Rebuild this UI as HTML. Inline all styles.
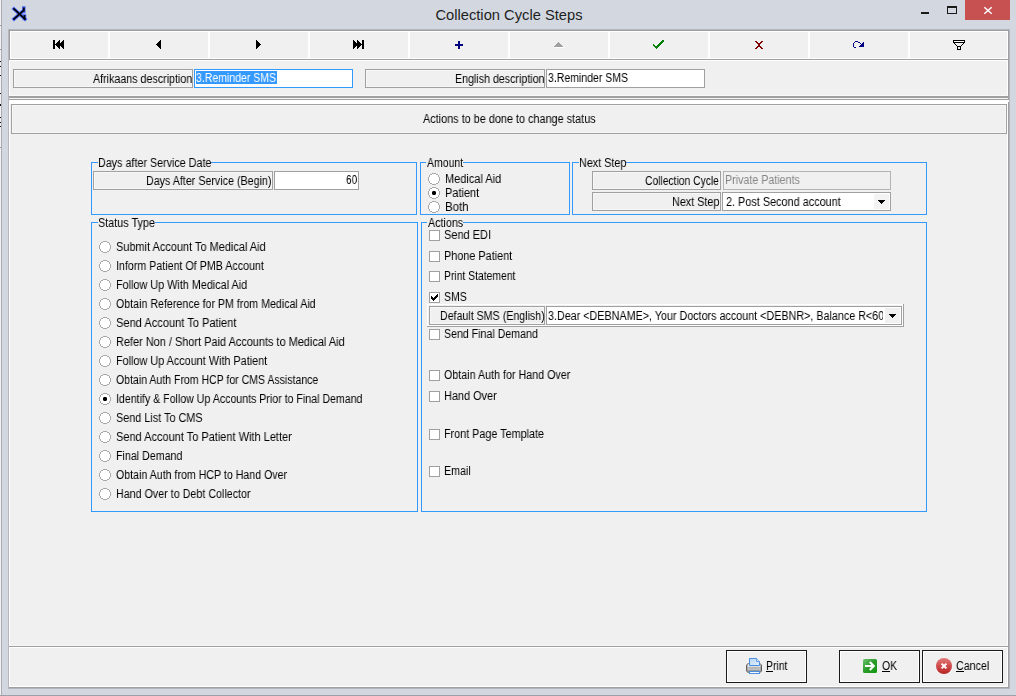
<!DOCTYPE html>
<html><head><meta charset="utf-8"><style>
html,body{margin:0;padding:0;width:1016px;height:696px;overflow:hidden;background:#d3d8e0}
body{position:relative;font-family:"Liberation Sans",sans-serif}
.t{position:absolute;white-space:nowrap;line-height:13px;font-size:12px;color:#000;will-change:transform}
</style></head><body>
<div style="position:absolute;left:0;top:0;width:1016px;height:696px;background:#d3d8e0"></div>
<div style="position:absolute;left:0px;top:0px;width:1px;height:696px;background:#f2f2f2"></div>
<div style="position:absolute;left:1px;top:0px;width:1px;height:696px;background:#a9adb3"></div>
<div style="position:absolute;left:0px;top:25px;width:1px;height:1px;background:#9a9a9a"></div>
<div style="position:absolute;left:0px;top:49px;width:1px;height:1px;background:#9a9a9a"></div>
<div style="position:absolute;left:0px;top:147px;width:1px;height:1px;background:#9a9a9a"></div>
<div style="position:absolute;left:0px;top:61px;width:1px;height:1px;background:#111"></div>
<div style="position:absolute;left:0px;top:66px;width:1px;height:1px;background:#111"></div>
<div style="position:absolute;left:0px;top:75px;width:1px;height:1px;background:#111"></div>
<div style="position:absolute;left:0px;top:93px;width:1px;height:1px;background:#111"></div>
<div style="position:absolute;left:0px;top:104px;width:1px;height:1px;background:#111"></div>
<div style="position:absolute;left:0px;top:105px;width:1px;height:1px;background:#111"></div>
<div style="position:absolute;left:0px;top:117px;width:1px;height:1px;background:#111"></div>
<div style="position:absolute;left:0px;top:122px;width:1px;height:1px;background:#111"></div>
<div style="position:absolute;left:0px;top:126px;width:1px;height:1px;background:#111"></div>
<div style="position:absolute;left:208.6px;width:600px;top:6px;text-align:center;font-size:15px;line-height:18px;color:#1e1e1e;transform:scaleX(0.981);transform-origin:50% 0">Collection Cycle Steps</div>
<svg style="position:absolute;left:0;top:0" width="32" height="28" viewBox="0 0 32 28">
<g stroke="#3a5cff" stroke-width="3.5" stroke-linecap="square" fill="none" opacity="0.9">
<path d="M14 9 L25 19"/><path d="M14 19 L22.5 11.5"/><path d="M23.8 8 L23.8 11.5"/><path d="M24.5 16 L24.5 18.5"/>
</g>
<g stroke="#000" stroke-width="1.7" stroke-linecap="square" fill="none">
<path d="M14 9 L25 19"/><path d="M14 19 L22.5 11.5"/><path d="M24.5 16 L24.5 18.5"/>
</g>
<path d="M23.8 7.5 L23.8 11.5" stroke="#000" stroke-width="1.9" fill="none"/>
</svg>
<div style="position:absolute;left:921px;top:12px;width:8px;height:2px;background:#1a1a1a"></div>
<div style="position:absolute;left:947px;top:6px;width:10px;height:8px;border:1px solid #1a1a1a;border-top-width:2px;box-sizing:border-box"></div>
<div style="position:absolute;left:965px;top:0px;width:45px;height:20px;background:#c75050"></div>
<svg style="position:absolute;left:0;top:0" width="1016" height="20">
<path d="M984.3 7.3 L991.7 13.7 M991.7 7.3 L984.3 13.7" stroke="#fff" stroke-width="1.5" fill="none"/></svg>
<div style="position:absolute;left:8px;top:29px;width:1002px;height:660px;background:#f0f0f0"></div>
<div style="position:absolute;left:8px;top:29px;width:1px;height:660px;background:#b3b7bd"></div>
<div style="position:absolute;left:1009px;top:29px;width:1px;height:660px;background:#b3b7bd"></div>
<div style="position:absolute;left:8px;top:29px;width:1002px;height:1px;background:#b3b7bd"></div>
<div style="position:absolute;left:8px;top:688px;width:1002px;height:1px;background:#b3b7bd"></div>
<div style="position:absolute;left:9px;top:30px;width:1000px;height:1px;background:#a0a0a0"></div>
<div style="position:absolute;left:1008px;top:30px;width:1px;height:70px;background:#a0a0a0"></div>
<div style="position:absolute;left:1008px;top:102px;width:1px;height:586px;background:#a0a0a0"></div>
<div style="position:absolute;left:9px;top:687px;width:1000px;height:1px;background:#a0a0a0"></div>
<div style="position:absolute;left:9px;top:30px;width:1px;height:30px;background:#a0a0a0"></div>
<div style="position:absolute;left:10px;top:31px;width:998px;height:1px;background:#fff"></div>
<div style="position:absolute;left:10px;top:31px;width:1px;height:28px;background:#fff"></div>
<div style="position:absolute;left:9px;top:60px;width:1px;height:627px;background:#fff"></div>
<div style="position:absolute;left:1007px;top:31px;width:1px;height:656px;background:#fff"></div>
<div style="position:absolute;left:9px;top:686px;width:999px;height:1px;background:#fff"></div>
<div style="position:absolute;left:0px;top:695px;width:1016px;height:1px;background:#9da1a7"></div>
<div style="position:absolute;left:10px;top:58px;width:998px;height:1px;background:#fff"></div>
<div style="position:absolute;left:9px;top:59px;width:1000px;height:1px;background:#a0a0a0"></div>
<div style="position:absolute;left:9px;top:60px;width:999px;height:1px;background:#fff"></div>
<div style="position:absolute;left:108px;top:32px;width:2px;height:26px;background:#fff"></div>
<div style="position:absolute;left:208px;top:32px;width:2px;height:26px;background:#fff"></div>
<div style="position:absolute;left:308px;top:32px;width:2px;height:26px;background:#fff"></div>
<div style="position:absolute;left:408px;top:32px;width:2px;height:26px;background:#fff"></div>
<div style="position:absolute;left:508px;top:32px;width:2px;height:26px;background:#fff"></div>
<div style="position:absolute;left:608px;top:32px;width:2px;height:26px;background:#fff"></div>
<div style="position:absolute;left:708px;top:32px;width:2px;height:26px;background:#fff"></div>
<div style="position:absolute;left:808px;top:32px;width:2px;height:26px;background:#fff"></div>
<div style="position:absolute;left:908px;top:32px;width:2px;height:26px;background:#fff"></div>
<svg style="position:absolute;left:0;top:0;shape-rendering:crispEdges" width="1016" height="60"><rect x="53" y="40" width="2" height="1" fill="#000"/><rect x="59" y="40" width="1" height="1" fill="#000"/><rect x="63" y="40" width="1" height="1" fill="#000"/><rect x="53" y="41" width="2" height="1" fill="#000"/><rect x="58" y="41" width="2" height="1" fill="#000"/><rect x="62" y="41" width="2" height="1" fill="#000"/><rect x="53" y="42" width="2" height="1" fill="#000"/><rect x="57" y="42" width="3" height="1" fill="#000"/><rect x="61" y="42" width="3" height="1" fill="#000"/><rect x="53" y="43" width="2" height="1" fill="#000"/><rect x="56" y="43" width="4" height="1" fill="#000"/><rect x="60" y="43" width="4" height="1" fill="#000"/><rect x="53" y="44" width="2" height="1" fill="#000"/><rect x="55" y="44" width="5" height="1" fill="#000"/><rect x="59" y="44" width="5" height="1" fill="#000"/><rect x="53" y="45" width="2" height="1" fill="#000"/><rect x="56" y="45" width="4" height="1" fill="#000"/><rect x="60" y="45" width="4" height="1" fill="#000"/><rect x="53" y="46" width="2" height="1" fill="#000"/><rect x="57" y="46" width="3" height="1" fill="#000"/><rect x="61" y="46" width="3" height="1" fill="#000"/><rect x="53" y="47" width="2" height="1" fill="#000"/><rect x="58" y="47" width="2" height="1" fill="#000"/><rect x="62" y="47" width="2" height="1" fill="#000"/><rect x="53" y="48" width="2" height="1" fill="#000"/><rect x="59" y="48" width="1" height="1" fill="#000"/><rect x="63" y="48" width="1" height="1" fill="#000"/><rect x="160" y="40" width="1" height="1" fill="#000"/><rect x="159" y="41" width="2" height="1" fill="#000"/><rect x="158" y="42" width="3" height="1" fill="#000"/><rect x="157" y="43" width="4" height="1" fill="#000"/><rect x="156" y="44" width="5" height="1" fill="#000"/><rect x="157" y="45" width="4" height="1" fill="#000"/><rect x="158" y="46" width="3" height="1" fill="#000"/><rect x="159" y="47" width="2" height="1" fill="#000"/><rect x="160" y="48" width="1" height="1" fill="#000"/><rect x="256" y="40" width="1" height="1" fill="#000"/><rect x="256" y="41" width="2" height="1" fill="#000"/><rect x="256" y="42" width="3" height="1" fill="#000"/><rect x="256" y="43" width="4" height="1" fill="#000"/><rect x="256" y="44" width="5" height="1" fill="#000"/><rect x="256" y="45" width="4" height="1" fill="#000"/><rect x="256" y="46" width="3" height="1" fill="#000"/><rect x="256" y="47" width="2" height="1" fill="#000"/><rect x="256" y="48" width="1" height="1" fill="#000"/><rect x="353" y="40" width="1" height="1" fill="#000"/><rect x="357" y="40" width="1" height="1" fill="#000"/><rect x="362" y="40" width="2" height="1" fill="#000"/><rect x="353" y="41" width="2" height="1" fill="#000"/><rect x="357" y="41" width="2" height="1" fill="#000"/><rect x="362" y="41" width="2" height="1" fill="#000"/><rect x="353" y="42" width="3" height="1" fill="#000"/><rect x="357" y="42" width="3" height="1" fill="#000"/><rect x="362" y="42" width="2" height="1" fill="#000"/><rect x="353" y="43" width="4" height="1" fill="#000"/><rect x="357" y="43" width="4" height="1" fill="#000"/><rect x="362" y="43" width="2" height="1" fill="#000"/><rect x="353" y="44" width="5" height="1" fill="#000"/><rect x="357" y="44" width="5" height="1" fill="#000"/><rect x="362" y="44" width="2" height="1" fill="#000"/><rect x="353" y="45" width="4" height="1" fill="#000"/><rect x="357" y="45" width="4" height="1" fill="#000"/><rect x="362" y="45" width="2" height="1" fill="#000"/><rect x="353" y="46" width="3" height="1" fill="#000"/><rect x="357" y="46" width="3" height="1" fill="#000"/><rect x="362" y="46" width="2" height="1" fill="#000"/><rect x="353" y="47" width="2" height="1" fill="#000"/><rect x="357" y="47" width="2" height="1" fill="#000"/><rect x="362" y="47" width="2" height="1" fill="#000"/><rect x="353" y="48" width="1" height="1" fill="#000"/><rect x="357" y="48" width="1" height="1" fill="#000"/><rect x="362" y="48" width="2" height="1" fill="#000"/><rect x="455" y="44" width="8" height="1" fill="#000080"/><rect x="455" y="45" width="8" height="1" fill="#000080"/><rect x="458" y="41" width="2" height="1" fill="#000080"/><rect x="458" y="42" width="2" height="1" fill="#000080"/><rect x="458" y="43" width="2" height="1" fill="#000080"/><rect x="458" y="44" width="2" height="1" fill="#000080"/><rect x="458" y="45" width="2" height="1" fill="#000080"/><rect x="458" y="46" width="2" height="1" fill="#000080"/><rect x="458" y="47" width="2" height="1" fill="#000080"/><rect x="458" y="48" width="2" height="1" fill="#000080"/><rect x="558" y="42" width="1" height="1" fill="#a0a0a0"/><rect x="557" y="43" width="3" height="1" fill="#a0a0a0"/><rect x="556" y="44" width="5" height="1" fill="#a0a0a0"/><rect x="555" y="45" width="7" height="1" fill="#a0a0a0"/><rect x="554" y="46" width="9" height="1" fill="#a0a0a0"/><rect x="555" y="47" width="9" height="1" fill="#ffffff"/><rect x="662" y="40" width="2" height="1" fill="#008000"/><rect x="661" y="41" width="3" height="1" fill="#008000"/><rect x="660" y="42" width="3" height="1" fill="#008000"/><rect x="659" y="43" width="3" height="1" fill="#008000"/><rect x="653" y="44" width="1" height="1" fill="#008000"/><rect x="658" y="44" width="3" height="1" fill="#008000"/><rect x="653" y="45" width="2" height="1" fill="#008000"/><rect x="657" y="45" width="3" height="1" fill="#008000"/><rect x="654" y="46" width="5" height="1" fill="#008000"/><rect x="655" y="47" width="3" height="1" fill="#008000"/><rect x="656" y="48" width="1" height="1" fill="#008000"/><rect x="755" y="41" width="2" height="1" fill="#800000"/><rect x="761" y="41" width="2" height="1" fill="#800000"/><rect x="756" y="42" width="2" height="1" fill="#800000"/><rect x="760" y="42" width="2" height="1" fill="#800000"/><rect x="757" y="43" width="2" height="1" fill="#800000"/><rect x="759" y="43" width="2" height="1" fill="#800000"/><rect x="758" y="44" width="2" height="1" fill="#800000"/><rect x="758" y="44" width="2" height="1" fill="#800000"/><rect x="758" y="45" width="2" height="1" fill="#800000"/><rect x="758" y="45" width="2" height="1" fill="#800000"/><rect x="757" y="46" width="2" height="1" fill="#800000"/><rect x="759" y="46" width="2" height="1" fill="#800000"/><rect x="756" y="47" width="2" height="1" fill="#800000"/><rect x="760" y="47" width="2" height="1" fill="#800000"/><rect x="755" y="48" width="2" height="1" fill="#800000"/><rect x="761" y="48" width="2" height="1" fill="#800000"/><rect x="855" y="41" width="3" height="1" fill="#000080"/><rect x="854" y="42" width="1" height="1" fill="#000080"/><rect x="858" y="42" width="2" height="1" fill="#000080"/><rect x="863" y="42" width="1" height="1" fill="#000080"/><rect x="853" y="43" width="1" height="1" fill="#000080"/><rect x="860" y="43" width="1" height="1" fill="#000080"/><rect x="862" y="43" width="2" height="1" fill="#000080"/><rect x="853" y="44" width="1" height="1" fill="#000080"/><rect x="861" y="44" width="3" height="1" fill="#000080"/><rect x="853" y="45" width="1" height="1" fill="#000080"/><rect x="860" y="45" width="4" height="1" fill="#000080"/><rect x="853" y="46" width="1" height="1" fill="#000080"/><rect x="859" y="46" width="5" height="1" fill="#000080"/><rect x="854" y="47" width="2" height="1" fill="#000080"/><rect x="953" y="40" width="12" height="1" fill="#000"/><rect x="953" y="41" width="1" height="1" fill="#000"/><rect x="964" y="41" width="1" height="1" fill="#000"/><rect x="953" y="42" width="12" height="1" fill="#000"/><rect x="954" y="43" width="1" height="1" fill="#000"/><rect x="963" y="43" width="1" height="1" fill="#000"/><rect x="955" y="44" width="1" height="1" fill="#000"/><rect x="962" y="44" width="1" height="1" fill="#000"/><rect x="956" y="45" width="1" height="1" fill="#000"/><rect x="961" y="45" width="1" height="1" fill="#000"/><rect x="957" y="46" width="4" height="1" fill="#000"/><rect x="957" y="47" width="1" height="1" fill="#000"/><rect x="960" y="47" width="1" height="1" fill="#000"/><rect x="957" y="48" width="1" height="1" fill="#000"/><rect x="960" y="48" width="1" height="1" fill="#000"/><rect x="957" y="49" width="4" height="1" fill="#000"/><rect x="954" y="41" width="10" height="1" fill="#fff"/></svg>
<div style="position:absolute;left:13px;top:69px;width:180px;height:19px;border:1px solid #a0a0a0;box-sizing:border-box;box-shadow:inset 1px 1px 0 #f7f7f7, inset -1px -1px 0 #f7f7f7"></div>
<div class="t" style="left:93.11px;top:73px;color:#000;transform:scaleX(0.8909);transform-origin:0 0;">Afrikaans description</div>
<div style="position:absolute;left:194px;top:69px;width:159px;height:19px;border:1px solid #3399ff;box-sizing:border-box;background:#fff"></div>
<div style="position:absolute;left:196px;top:71px;width:81px;height:13px;background:#3399ff"></div>
<div class="t" style="left:196.12px;top:72px;color:#fff;transform:scaleX(0.8764);transform-origin:0 0;">3.Reminder SMS</div>
<div style="position:absolute;left:365px;top:69px;width:180px;height:19px;border:1px solid #a0a0a0;box-sizing:border-box;box-shadow:inset 1px 1px 0 #f7f7f7, inset -1px -1px 0 #f7f7f7"></div>
<div class="t" style="left:455.22px;top:73px;color:#000;transform:scaleX(0.8878);transform-origin:0 0;">English description</div>
<div style="position:absolute;left:546px;top:69px;width:159px;height:19px;border:1px solid #a0a0a0;box-sizing:border-box;background:#fff"></div>
<div class="t" style="left:548.12px;top:72px;color:#000;transform:scaleX(0.8764);transform-origin:0 0;">3.Reminder SMS</div>
<div style="position:absolute;left:10px;top:95px;width:998px;height:1px;background:#f8f8f8"></div>
<div style="position:absolute;left:9px;top:96px;width:1000px;height:1px;background:#a0a0a0"></div>
<div style="position:absolute;left:9px;top:97px;width:1000px;height:1px;background:#a0a0a0"></div>
<div style="position:absolute;left:9px;top:98px;width:999px;height:1px;background:#f4f4f4"></div>
<div style="position:absolute;left:9px;top:99px;width:1000px;height:1px;background:#a0a0a0"></div>
<div style="position:absolute;left:9px;top:100px;width:1000px;height:2px;background:#fff"></div>
<div style="position:absolute;left:9px;top:102px;width:999px;height:2px;background:#fff"></div>
<div style="position:absolute;left:11px;top:104px;width:996px;height:30px;border:1px solid #a0a0a0;box-sizing:border-box;box-shadow:inset 1px 1px 0 #f7f7f7, inset -1px -1px 0 #f7f7f7"></div>
<div class="t" style="left:423.00px;top:113px;color:#000;transform:scaleX(0.9048);transform-origin:0 0;">Actions to be done to change status</div>
<div style="position:absolute;left:91px;top:162px;width:326px;height:53px;border:1px solid #3399ff;box-sizing:border-box"></div>
<div style="position:absolute;left:98px;top:161px;width:113px;height:3px;background:#f0f0f0"></div>
<div class="t" style="left:98.10px;top:157px;color:#000;transform:scaleX(0.8952);transform-origin:0 0;">Days after Service Date</div>
<div style="position:absolute;left:93px;top:171px;width:180px;height:19px;border:1px solid #a0a0a0;box-sizing:border-box;box-shadow:inset 1px 1px 0 #f7f7f7, inset -1px -1px 0 #f7f7f7"></div>
<div class="t" style="left:146.22px;top:175px;color:#000;transform:scaleX(0.8913);transform-origin:0 0;">Days After Service (Begin)</div>
<div style="position:absolute;left:274px;top:171px;width:85px;height:19px;border:1px solid #a0a0a0;box-sizing:border-box;background:#fff"></div>
<div class="t" style="left:346.17px;top:174px;color:#000;transform:scaleX(0.8333);transform-origin:0 0;">60</div>
<div style="position:absolute;left:420px;top:162px;width:150px;height:53px;border:1px solid #3399ff;box-sizing:border-box"></div>
<div style="position:absolute;left:426px;top:161px;width:37px;height:3px;background:#f0f0f0"></div>
<div class="t" style="left:427.00px;top:157px;color:#000;transform:scaleX(0.8750);transform-origin:0 0;">Amount</div>
<svg style="position:absolute;left:428px;top:173px;shape-rendering:crispEdges" width="12" height="12"><path d="M4 0h4v1h2v1h1v2h1v4h-1v2h-1v1h-2v1h-4v-1h-2v-1h-1v-2h-1v-4h1v-2h1v-1h2z" fill="#a8a8a8"/><path d="M4 1h4v1h2v2h1v4h-1v2h-2v1h-4v-1h-2v-2h-1v-4h1v-2h2z" fill="#fff"/></svg>
<div class="t" style="left:445.08px;top:173px;color:#000;transform:scaleX(0.9153);transform-origin:0 0;">Medical Aid</div>
<svg style="position:absolute;left:428px;top:187px;shape-rendering:crispEdges" width="12" height="12"><path d="M4 0h4v1h2v1h1v2h1v4h-1v2h-1v1h-2v1h-4v-1h-2v-1h-1v-2h-1v-4h1v-2h1v-1h2z" fill="#a8a8a8"/><path d="M4 1h4v1h2v2h1v4h-1v2h-2v1h-4v-1h-2v-2h-1v-4h1v-2h2z" fill="#fff"/><rect x="5" y="4" width="2" height="4" fill="#000"/><rect x="4" y="5" width="4" height="2" fill="#000"/><rect x="4" y="4" width="1" height="1" fill="#777"/><rect x="7" y="4" width="1" height="1" fill="#777"/><rect x="4" y="7" width="1" height="1" fill="#777"/><rect x="7" y="7" width="1" height="1" fill="#777"/></svg>
<div class="t" style="left:445.09px;top:187px;color:#000;transform:scaleX(0.9143);transform-origin:0 0;">Patient</div>
<svg style="position:absolute;left:428px;top:201px;shape-rendering:crispEdges" width="12" height="12"><path d="M4 0h4v1h2v1h1v2h1v4h-1v2h-1v1h-2v1h-4v-1h-2v-1h-1v-2h-1v-4h1v-2h1v-1h2z" fill="#a8a8a8"/><path d="M4 1h4v1h2v2h1v4h-1v2h-2v1h-4v-1h-2v-2h-1v-4h1v-2h2z" fill="#fff"/></svg>
<div class="t" style="left:445.05px;top:201px;color:#000;transform:scaleX(0.9545);transform-origin:0 0;">Both</div>
<div style="position:absolute;left:572px;top:162px;width:355px;height:53px;border:1px solid #3399ff;box-sizing:border-box"></div>
<div style="position:absolute;left:579px;top:161px;width:47px;height:3px;background:#f0f0f0"></div>
<div class="t" style="left:579.10px;top:157px;color:#000;transform:scaleX(0.9000);transform-origin:0 0;">Next Step</div>
<div style="position:absolute;left:592px;top:171px;width:129px;height:19px;border:1px solid #a0a0a0;box-sizing:border-box;box-shadow:inset 1px 1px 0 #f7f7f7, inset -1px -1px 0 #f7f7f7"></div>
<div class="t" style="left:645.14px;top:175px;color:#000;transform:scaleX(0.8588);transform-origin:0 0;">Collection Cycle</div>
<div style="position:absolute;left:723px;top:171px;width:168px;height:19px;border:1px solid #b4b4b4;box-sizing:border-box;background:#f0f0f0"></div>
<div class="t" style="left:725.11px;top:174px;color:#858585;transform:scaleX(0.8902);transform-origin:0 0;">Private Patients</div>
<div style="position:absolute;left:592px;top:192px;width:129px;height:19px;border:1px solid #a0a0a0;box-sizing:border-box;box-shadow:inset 1px 1px 0 #f7f7f7, inset -1px -1px 0 #f7f7f7"></div>
<div class="t" style="left:672.20px;top:196px;color:#000;transform:scaleX(0.9000);transform-origin:0 0;">Next Step</div>
<div style="position:absolute;left:722px;top:192px;width:169px;height:19px;border:1px solid #a0a0a0;box-sizing:border-box;background:#fff"></div>
<div class="t" style="left:726.00px;top:196px;color:#000;transform:scaleX(0.9048);transform-origin:0 0;">2. Post Second account</div>
<div style="position:absolute;left:874px;top:194px;width:15px;height:15px;background:#f3f3f3"></div>
<svg style="position:absolute;left:878px;top:200px;shape-rendering:crispEdges" width="7" height="4"><path d="M0 0h7v1h-1v1h-1v1h-1v1h-1v-1h-1v-1h-1v-1h-1z" fill="#000"/></svg>
<div style="position:absolute;left:91px;top:222px;width:327px;height:290px;border:1px solid #3399ff;box-sizing:border-box"></div>
<div style="position:absolute;left:98px;top:221px;width:57px;height:3px;background:#f0f0f0"></div>
<div class="t" style="left:98.10px;top:217px;color:#000;transform:scaleX(0.9016);transform-origin:0 0;">Status Type</div>
<svg style="position:absolute;left:99px;top:241px;shape-rendering:crispEdges" width="12" height="12"><path d="M4 0h4v1h2v1h1v2h1v4h-1v2h-1v1h-2v1h-4v-1h-2v-1h-1v-2h-1v-4h1v-2h1v-1h2z" fill="#a8a8a8"/><path d="M4 1h4v1h2v2h1v4h-1v2h-2v1h-4v-1h-2v-2h-1v-4h1v-2h2z" fill="#fff"/></svg>
<div class="t" style="left:116.09px;top:241px;color:#000;transform:scaleX(0.9130);transform-origin:0 0;">Submit Account To Medical Aid</div>
<svg style="position:absolute;left:99px;top:260px;shape-rendering:crispEdges" width="12" height="12"><path d="M4 0h4v1h2v1h1v2h1v4h-1v2h-1v1h-2v1h-4v-1h-2v-1h-1v-2h-1v-4h1v-2h1v-1h2z" fill="#a8a8a8"/><path d="M4 1h4v1h2v2h1v4h-1v2h-2v1h-4v-1h-2v-2h-1v-4h1v-2h2z" fill="#fff"/></svg>
<div class="t" style="left:116.11px;top:260px;color:#000;transform:scaleX(0.8902);transform-origin:0 0;">Inform Patient Of PMB Account</div>
<svg style="position:absolute;left:99px;top:279px;shape-rendering:crispEdges" width="12" height="12"><path d="M4 0h4v1h2v1h1v2h1v4h-1v2h-1v1h-2v1h-4v-1h-2v-1h-1v-2h-1v-4h1v-2h1v-1h2z" fill="#a8a8a8"/><path d="M4 1h4v1h2v2h1v4h-1v2h-2v1h-4v-1h-2v-2h-1v-4h1v-2h2z" fill="#fff"/></svg>
<div class="t" style="left:116.10px;top:279px;color:#000;transform:scaleX(0.9021);transform-origin:0 0;">Follow Up With Medical Aid</div>
<svg style="position:absolute;left:99px;top:298px;shape-rendering:crispEdges" width="12" height="12"><path d="M4 0h4v1h2v1h1v2h1v4h-1v2h-1v1h-2v1h-4v-1h-2v-1h-1v-2h-1v-4h1v-2h1v-1h2z" fill="#a8a8a8"/><path d="M4 1h4v1h2v2h1v4h-1v2h-2v1h-4v-1h-2v-2h-1v-4h1v-2h2z" fill="#fff"/></svg>
<div class="t" style="left:116.30px;top:298px;color:#000;transform:scaleX(0.8879);transform-origin:0 0;">Obtain Reference for PM from Medical Aid</div>
<svg style="position:absolute;left:99px;top:317px;shape-rendering:crispEdges" width="12" height="12"><path d="M4 0h4v1h2v1h1v2h1v4h-1v2h-1v1h-2v1h-4v-1h-2v-1h-1v-2h-1v-4h1v-2h1v-1h2z" fill="#a8a8a8"/><path d="M4 1h4v1h2v2h1v4h-1v2h-2v1h-4v-1h-2v-2h-1v-4h1v-2h2z" fill="#fff"/></svg>
<div class="t" style="left:116.08px;top:317px;color:#000;transform:scaleX(0.9225);transform-origin:0 0;">Send Account To Patient</div>
<svg style="position:absolute;left:99px;top:336px;shape-rendering:crispEdges" width="12" height="12"><path d="M4 0h4v1h2v1h1v2h1v4h-1v2h-1v1h-2v1h-4v-1h-2v-1h-1v-2h-1v-4h1v-2h1v-1h2z" fill="#a8a8a8"/><path d="M4 1h4v1h2v2h1v4h-1v2h-2v1h-4v-1h-2v-2h-1v-4h1v-2h2z" fill="#fff"/></svg>
<div class="t" style="left:116.09px;top:336px;color:#000;transform:scaleX(0.9113);transform-origin:0 0;">Refer Non / Short Paid Accounts to Medical Aid</div>
<svg style="position:absolute;left:99px;top:355px;shape-rendering:crispEdges" width="12" height="12"><path d="M4 0h4v1h2v1h1v2h1v4h-1v2h-1v1h-2v1h-4v-1h-2v-1h-1v-2h-1v-4h1v-2h1v-1h2z" fill="#a8a8a8"/><path d="M4 1h4v1h2v2h1v4h-1v2h-2v1h-4v-1h-2v-2h-1v-4h1v-2h2z" fill="#fff"/></svg>
<div class="t" style="left:116.10px;top:355px;color:#000;transform:scaleX(0.9030);transform-origin:0 0;">Follow Up Account With Patient</div>
<svg style="position:absolute;left:99px;top:374px;shape-rendering:crispEdges" width="12" height="12"><path d="M4 0h4v1h2v1h1v2h1v4h-1v2h-1v1h-2v1h-4v-1h-2v-1h-1v-2h-1v-4h1v-2h1v-1h2z" fill="#a8a8a8"/><path d="M4 1h4v1h2v2h1v4h-1v2h-2v1h-4v-1h-2v-2h-1v-4h1v-2h2z" fill="#fff"/></svg>
<div class="t" style="left:116.30px;top:374px;color:#000;transform:scaleX(0.8777);transform-origin:0 0;">Obtain Auth From HCP for CMS Assistance</div>
<svg style="position:absolute;left:99px;top:393px;shape-rendering:crispEdges" width="12" height="12"><path d="M4 0h4v1h2v1h1v2h1v4h-1v2h-1v1h-2v1h-4v-1h-2v-1h-1v-2h-1v-4h1v-2h1v-1h2z" fill="#a8a8a8"/><path d="M4 1h4v1h2v2h1v4h-1v2h-2v1h-4v-1h-2v-2h-1v-4h1v-2h2z" fill="#fff"/><rect x="5" y="4" width="2" height="4" fill="#000"/><rect x="4" y="5" width="4" height="2" fill="#000"/><rect x="4" y="4" width="1" height="1" fill="#777"/><rect x="7" y="4" width="1" height="1" fill="#777"/><rect x="4" y="7" width="1" height="1" fill="#777"/><rect x="7" y="7" width="1" height="1" fill="#777"/></svg>
<div class="t" style="left:116.12px;top:393px;color:#000;transform:scaleX(0.8841);transform-origin:0 0;">Identify &amp; Follow Up Accounts Prior to Final Demand</div>
<svg style="position:absolute;left:99px;top:412px;shape-rendering:crispEdges" width="12" height="12"><path d="M4 0h4v1h2v1h1v2h1v4h-1v2h-1v1h-2v1h-4v-1h-2v-1h-1v-2h-1v-4h1v-2h1v-1h2z" fill="#a8a8a8"/><path d="M4 1h4v1h2v2h1v4h-1v2h-2v1h-4v-1h-2v-2h-1v-4h1v-2h2z" fill="#fff"/></svg>
<div class="t" style="left:116.10px;top:412px;color:#000;transform:scaleX(0.9032);transform-origin:0 0;">Send List To CMS</div>
<svg style="position:absolute;left:99px;top:431px;shape-rendering:crispEdges" width="12" height="12"><path d="M4 0h4v1h2v1h1v2h1v4h-1v2h-1v1h-2v1h-4v-1h-2v-1h-1v-2h-1v-4h1v-2h1v-1h2z" fill="#a8a8a8"/><path d="M4 1h4v1h2v2h1v4h-1v2h-2v1h-4v-1h-2v-2h-1v-4h1v-2h2z" fill="#fff"/></svg>
<div class="t" style="left:116.08px;top:431px;color:#000;transform:scaleX(0.9158);transform-origin:0 0;">Send Account To Patient With Letter</div>
<svg style="position:absolute;left:99px;top:450px;shape-rendering:crispEdges" width="12" height="12"><path d="M4 0h4v1h2v1h1v2h1v4h-1v2h-1v1h-2v1h-4v-1h-2v-1h-1v-2h-1v-4h1v-2h1v-1h2z" fill="#a8a8a8"/><path d="M4 1h4v1h2v2h1v4h-1v2h-2v1h-4v-1h-2v-2h-1v-4h1v-2h2z" fill="#fff"/></svg>
<div class="t" style="left:116.11px;top:450px;color:#000;transform:scaleX(0.8889);transform-origin:0 0;">Final Demand</div>
<svg style="position:absolute;left:99px;top:469px;shape-rendering:crispEdges" width="12" height="12"><path d="M4 0h4v1h2v1h1v2h1v4h-1v2h-1v1h-2v1h-4v-1h-2v-1h-1v-2h-1v-4h1v-2h1v-1h2z" fill="#a8a8a8"/><path d="M4 1h4v1h2v2h1v4h-1v2h-2v1h-4v-1h-2v-2h-1v-4h1v-2h2z" fill="#fff"/></svg>
<div class="t" style="left:116.30px;top:469px;color:#000;transform:scaleX(0.8854);transform-origin:0 0;">Obtain Auth from HCP to Hand Over</div>
<svg style="position:absolute;left:99px;top:488px;shape-rendering:crispEdges" width="12" height="12"><path d="M4 0h4v1h2v1h1v2h1v4h-1v2h-1v1h-2v1h-4v-1h-2v-1h-1v-2h-1v-4h1v-2h1v-1h2z" fill="#a8a8a8"/><path d="M4 1h4v1h2v2h1v4h-1v2h-2v1h-4v-1h-2v-2h-1v-4h1v-2h2z" fill="#fff"/></svg>
<div class="t" style="left:116.11px;top:488px;color:#000;transform:scaleX(0.8926);transform-origin:0 0;">Hand Over to Debt Collector</div>
<div style="position:absolute;left:421px;top:222px;width:506px;height:290px;border:1px solid #3399ff;box-sizing:border-box"></div>
<div style="position:absolute;left:427px;top:221px;width:36px;height:3px;background:#f0f0f0"></div>
<div class="t" style="left:428.00px;top:217px;color:#000;transform:scaleX(0.8947);transform-origin:0 0;">Actions</div>
<div style="position:absolute;left:429px;top:230px;width:11px;height:11px;border:1px solid #a0a0a0;box-sizing:border-box;background:#fff"></div>
<div class="t" style="left:444.08px;top:229px;color:#000;transform:scaleX(0.9167);transform-origin:0 0;">Send EDI</div>
<div style="position:absolute;left:429px;top:251px;width:11px;height:11px;border:1px solid #a0a0a0;box-sizing:border-box;background:#fff"></div>
<div class="t" style="left:444.10px;top:250px;color:#000;transform:scaleX(0.9041);transform-origin:0 0;">Phone Patient</div>
<div style="position:absolute;left:429px;top:271px;width:11px;height:11px;border:1px solid #a0a0a0;box-sizing:border-box;background:#fff"></div>
<div class="t" style="left:444.14px;top:270px;color:#000;transform:scaleX(0.8642);transform-origin:0 0;">Print Statement</div>
<div style="position:absolute;left:429px;top:292px;width:11px;height:11px;border:1px solid #a0a0a0;box-sizing:border-box;background:#fff"></div>
<svg style="position:absolute;left:429px;top:292px;shape-rendering:crispEdges" width="11" height="11"><rect x="2" y="4" width="1" height="3" fill="#000"/><rect x="3" y="5" width="1" height="3" fill="#000"/><rect x="4" y="6" width="1" height="3" fill="#000"/><rect x="5" y="5" width="1" height="3" fill="#000"/><rect x="6" y="4" width="1" height="3" fill="#000"/><rect x="7" y="3" width="1" height="3" fill="#000"/><rect x="8" y="2" width="1" height="3" fill="#000"/></svg>
<div class="t" style="left:444.12px;top:291px;color:#000;transform:scaleX(0.8750);transform-origin:0 0;">SMS</div>
<div style="position:absolute;left:429px;top:329px;width:11px;height:11px;border:1px solid #a0a0a0;box-sizing:border-box;background:#fff"></div>
<div class="t" style="left:444.12px;top:328px;color:#000;transform:scaleX(0.8846);transform-origin:0 0;">Send Final Demand</div>
<div style="position:absolute;left:429px;top:370px;width:11px;height:11px;border:1px solid #a0a0a0;box-sizing:border-box;background:#fff"></div>
<div class="t" style="left:444.30px;top:369px;color:#000;transform:scaleX(0.8929);transform-origin:0 0;">Obtain Auth for Hand Over</div>
<div style="position:absolute;left:429px;top:391px;width:11px;height:11px;border:1px solid #a0a0a0;box-sizing:border-box;background:#fff"></div>
<div class="t" style="left:444.09px;top:390px;color:#000;transform:scaleX(0.9107);transform-origin:0 0;">Hand Over</div>
<div style="position:absolute;left:429px;top:429px;width:11px;height:11px;border:1px solid #a0a0a0;box-sizing:border-box;background:#fff"></div>
<div class="t" style="left:444.10px;top:428px;color:#000;transform:scaleX(0.8991);transform-origin:0 0;">Front Page Template</div>
<div style="position:absolute;left:429px;top:466px;width:11px;height:11px;border:1px solid #a0a0a0;box-sizing:border-box;background:#fff"></div>
<div class="t" style="left:444.11px;top:465px;color:#000;transform:scaleX(0.8889);transform-origin:0 0;">Email</div>
<div style="position:absolute;left:427px;top:304px;width:477px;height:1px;background:#fff"></div>
<div style="position:absolute;left:427px;top:304px;width:1px;height:23px;background:#fff"></div>
<div style="position:absolute;left:427px;top:326px;width:477px;height:1px;background:#a0a0a0"></div>
<div style="position:absolute;left:903px;top:304px;width:1px;height:23px;background:#a0a0a0"></div>
<div style="position:absolute;left:428px;top:305px;width:475px;height:21px;background:#f0f0f0"></div>
<div style="position:absolute;left:902px;top:305px;width:1px;height:21px;background:#fff"></div>
<div style="position:absolute;left:428px;top:325px;width:475px;height:1px;background:#fff"></div>
<div style="position:absolute;left:429px;top:306px;width:116px;height:19px;border:1px solid #a0a0a0;box-sizing:border-box;box-shadow:inset 1px 1px 0 #f7f7f7, inset -1px -1px 0 #f7f7f7"></div>
<div class="t" style="left:440.23px;top:310px;color:#000;transform:scaleX(0.8870);transform-origin:0 0;">Default SMS (English)</div>
<div style="position:absolute;left:546px;top:306px;width:356px;height:19px;border:1px solid #a0a0a0;box-sizing:border-box;background:#fff"></div>
<div style="position:absolute;left:548px;top:308px;width:335px;height:15px;overflow:hidden">
<div class="t" style="left:0.10px;top:2px;color:#000;transform:scaleX(0.8960);transform-origin:0 0;">3.Dear &lt;DEBNAME&gt;, Your Doctors account &lt;DEBNR&gt;, Balance R&lt;60&gt; for</div>
</div>
<div style="position:absolute;left:885px;top:308px;width:15px;height:15px;background:#f0f0f0"></div>
<svg style="position:absolute;left:889px;top:314px;shape-rendering:crispEdges" width="7" height="4"><path d="M0 0h7v1h-1v1h-1v1h-1v1h-1v-1h-1v-1h-1v-1h-1z" fill="#000"/></svg>
<div style="position:absolute;left:9px;top:645px;width:999px;height:1px;background:#f6f6f6"></div>
<div style="position:absolute;left:9px;top:646px;width:999px;height:1px;background:#a0a0a0"></div>
<div style="position:absolute;left:9px;top:647px;width:999px;height:1px;background:#fff"></div>
<div style="position:absolute;left:726px;top:650px;width:81px;height:33px;border:1px solid #1a1a1a;box-sizing:border-box;box-shadow:inset 1px 1px 0 #fff, inset -1px -1px 0 #fff;background:#f0f0f0"></div>
<div style="position:absolute;left:839px;top:650px;width:81px;height:33px;border:1px solid #1a1a1a;box-sizing:border-box;box-shadow:inset 1px 1px 0 #fff, inset -1px -1px 0 #fff;background:#f0f0f0"></div>
<div style="position:absolute;left:922px;top:650px;width:81px;height:33px;border:1px solid #1a1a1a;box-sizing:border-box;box-shadow:inset 1px 1px 0 #fff, inset -1px -1px 0 #fff;background:#f0f0f0"></div>
<div class="t" style="left:766.13px;top:660px;color:#000;transform:scaleX(0.8696);transform-origin:0 0;">Print</div>
<div style="position:absolute;left:766px;top:671px;width:7px;height:1px;background:#000"></div>
<div class="t" style="left:882.30px;top:660px;color:#000;transform:scaleX(0.8750);transform-origin:0 0;">OK</div>
<div style="position:absolute;left:882px;top:671px;width:8px;height:1px;background:#000"></div>
<div class="t" style="left:956.30px;top:660px;color:#000;transform:scaleX(0.8889);transform-origin:0 0;">Cancel</div>
<div style="position:absolute;left:956px;top:671px;width:8px;height:1px;background:#000"></div>
<svg style="position:absolute;left:744px;top:656px" width="20" height="20" viewBox="0 0 20 20">
<defs><linearGradient id="pg" x1="0" y1="0" x2="0" y2="1"><stop offset="0" stop-color="#f4f4f4"/><stop offset="0.35" stop-color="#dcdcdc"/><stop offset="0.45" stop-color="#b4b4b4"/><stop offset="0.75" stop-color="#c4c4c4"/><stop offset="0.8" stop-color="#777"/><stop offset="1" stop-color="#9a9a9a"/></linearGradient>
<linearGradient id="ps" x1="0" y1="0" x2="1" y2="0"><stop offset="0" stop-color="#555"/><stop offset="0.15" stop-color="#fff" stop-opacity="0"/><stop offset="0.85" stop-color="#fff" stop-opacity="0"/><stop offset="1" stop-color="#444"/></linearGradient>
<linearGradient id="pp" x1="0" y1="0" x2="1" y2="1"><stop offset="0" stop-color="#b6d5f7"/><stop offset="1" stop-color="#e4f0fc"/></linearGradient></defs>
<rect x="2.5" y="7.5" width="15" height="9" rx="2.5" fill="url(#pg)" stroke="#6b6b6b" stroke-width="1"/>
<rect x="2.5" y="7.5" width="15" height="9" rx="2.5" fill="url(#ps)"/>
<path d="M5.5 2.5 H12.5 L15.5 5.5 V9.5 H5.5 Z" fill="url(#pp)" stroke="#4a8fe0" stroke-width="1"/>
<path d="M12.5 2.5 V5.5 H15.5" fill="#d8e8fa" stroke="#4a8fe0" stroke-width="0.8"/>
<rect x="5.5" y="15.5" width="10" height="2" fill="#f8fbff" stroke="#4a8fe0" stroke-width="1"/>
</svg>
<svg style="position:absolute;left:863px;top:659px" width="14" height="14" viewBox="0 0 14 14">
<defs><linearGradient id="g1" x1="0" y1="0" x2="1" y2="1"><stop offset="0" stop-color="#6cc46c"/><stop offset="0.5" stop-color="#2a9a2a"/><stop offset="1" stop-color="#119911"/></linearGradient></defs>
<rect x="0" y="0" width="14" height="14" rx="1.5" fill="url(#g1)"/>
<path d="M2 7 H10.5 M6.8 3 L10.8 7 L6.8 11" stroke="#fff" stroke-width="2.1" fill="none"/>
</svg>
<svg style="position:absolute;left:936px;top:658px" width="16" height="16" viewBox="0 0 16 16">
<defs><linearGradient id="g2" x1="0" y1="0" x2="0" y2="1"><stop offset="0" stop-color="#e27878"/><stop offset="0.6" stop-color="#cc4444"/><stop offset="1" stop-color="#b82222"/></linearGradient></defs>
<circle cx="8" cy="8" r="8" fill="url(#g2)"/>
<path d="M5.6 5.6 L10.4 10.4 M10.4 5.6 L5.6 10.4" stroke="#fff" stroke-width="1.9" fill="none"/>
</svg>
</body></html>
